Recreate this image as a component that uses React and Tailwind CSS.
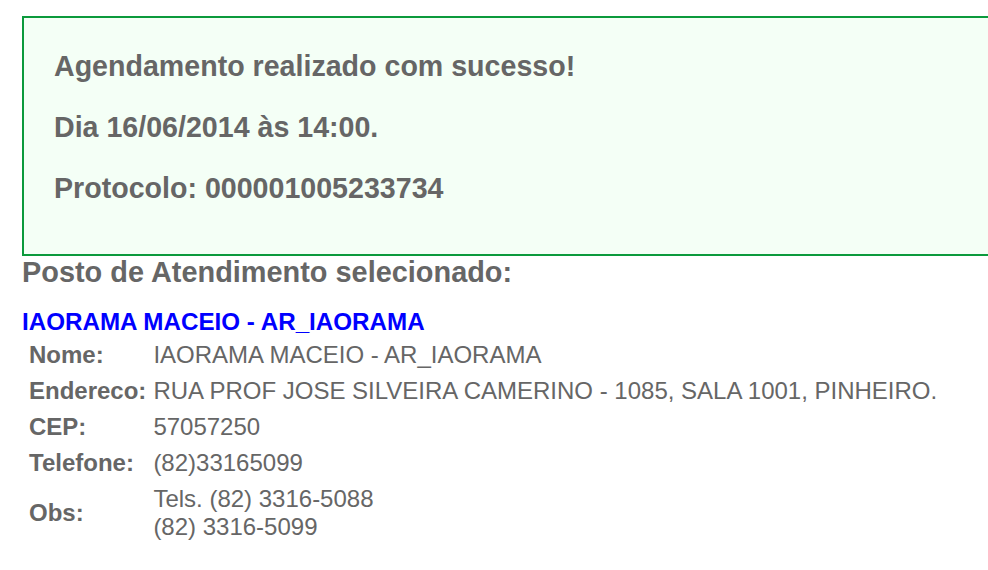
import React from 'react';

const posto = {
    nome: 'IAORAMA MACEIO - AR_IAORAMA',
    endereco: 'RUA PROF JOSE SILVEIRA CAMERINO - 1085, SALA 1001, PINHEIRO.',
    cep: '57057250',
    telefone: '(82)33165099',
    obs: ['Tels. (82) 3316-5088', '(82) 3316-5099']
};

const Row = ({ label, children }) => (
    <tr>
        <td className="font-bold align-middle pl-[7px] pr-[4px] py-[4px] whitespace-nowrap">{label}</td>
        <td className="align-middle pl-[3px] py-[4px]">{children}</td>
    </tr>
);

const App = () => {
    return (
        <div className="w-[988px] h-[570px] overflow-hidden bg-white text-[#666666] font-['Liberation_Sans',Arial,sans-serif]">
            <div className="pl-[22px] pt-[16px]">
                <div className="w-[1000px] border-2 border-[#0b9a3c] bg-[#f4fff6] pl-[30px] pt-[32px] pb-[50px]">
                    <p className="text-[28.6px] font-bold leading-[32px] mb-[29px]">Agendamento realizado com sucesso!</p>
                    <p className="text-[28.6px] font-bold leading-[32px] mb-[29px]">Dia 16/06/2014 às 14:00.</p>
                    <p className="text-[28.6px] font-bold leading-[32px]">Protocolo: 000001005233734</p>
                </div>
                <h2 className="text-[28.9px] font-bold leading-[32px]">Posto de Atendimento selecionado:</h2>
                <h3 className="mt-[20px] text-[24.2px] font-bold leading-[28px] text-[#0000ff]">{posto.nome}</h3>
                <table className="mt-[1px] text-[24px] leading-[28px] border-collapse">
                    <tbody>
                        <Row label="Nome:">{posto.nome}</Row>
                        <Row label="Endereco:">{posto.endereco}</Row>
                        <Row label="CEP:">{posto.cep}</Row>
                        <Row label="Telefone:">{posto.telefone}</Row>
                        <Row label="Obs:">
                            {posto.obs.map((linha) => (
                                <div key={linha}>{linha}</div>
                            ))}
                        </Row>
                    </tbody>
                </table>
            </div>
        </div>
    );
};

export default App;
